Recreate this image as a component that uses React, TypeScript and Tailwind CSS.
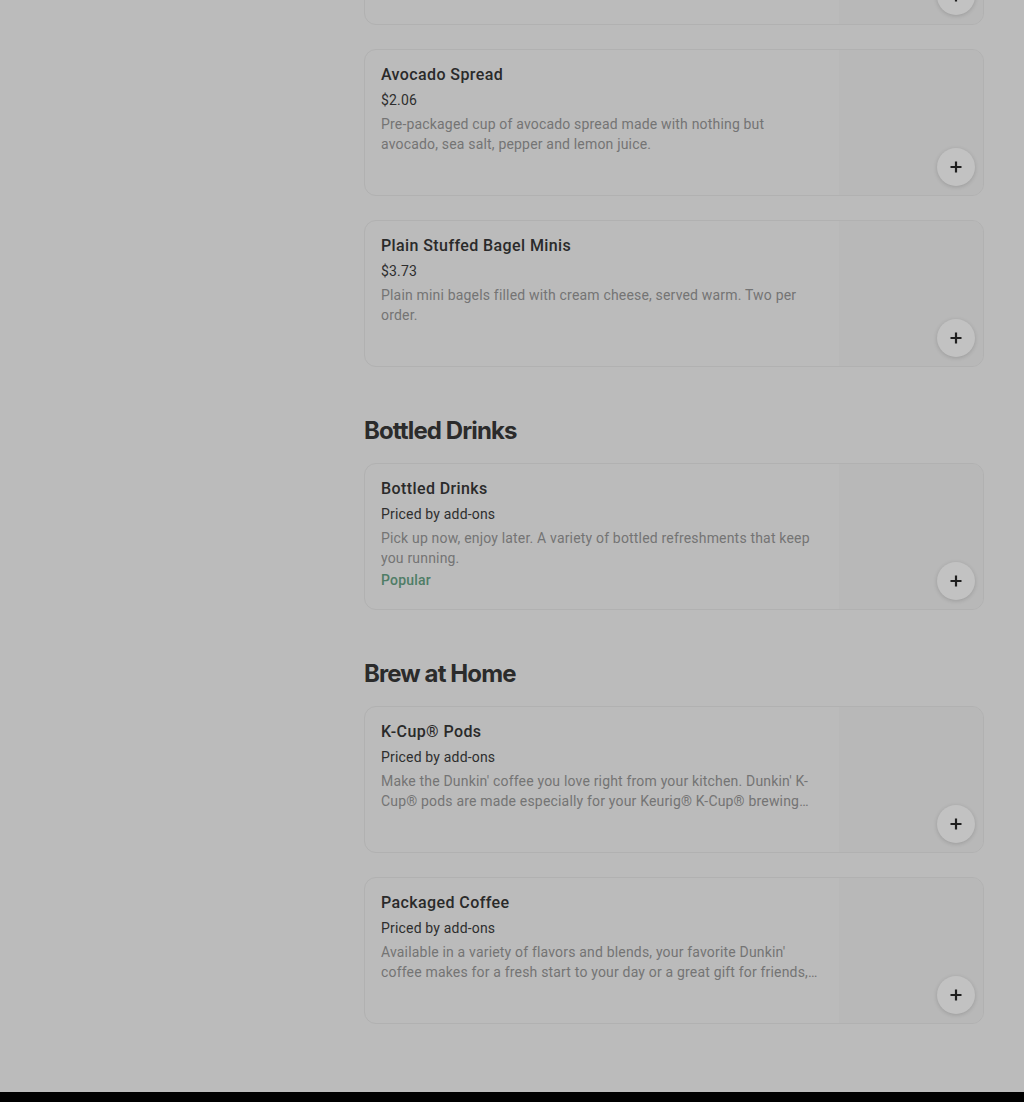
import React from "react";

type Item = {
  title?: string;
  price?: string;
  desc?: string;
  popular?: boolean;
};

function PlusButton() {
  return (
    <div className="absolute bottom-[9px] right-[8px] flex h-[38px] w-[38px] items-center justify-center rounded-full bg-[#c2c2c2] shadow-[0_1px_4px_rgba(0,0,0,0.16)]">
      <svg width="12" height="12" viewBox="0 0 12 12" aria-hidden="true">
        <path d="M6 0.5v11M0.5 6h11" stroke="#1f1f1f" strokeWidth="2.2" strokeLinecap="butt" />
      </svg>
    </div>
  );
}

function Card({ item }: { item: Item }) {
  return (
    <div className="relative flex h-[147px] w-[620px] overflow-hidden rounded-[12px] border border-[#b1b1b1] bg-[#bbbbbb]">
      <div className="flex min-w-0 flex-1 flex-col pl-4 pr-5 pt-[13px] tracking-[0.18px]">
        {item.title && (
          <div className="text-[16px] leading-6 font-medium tracking-[0.4px] text-[#2a2a2a]">{item.title}</div>
        )}
        {item.price && (
          <div className="mt-[3px] text-[14px] leading-5 text-[#2e2e2e]">{item.price}</div>
        )}
        {item.desc && (
          <div className="mt-1 line-clamp-2 text-[14px] leading-5 text-[#747474]">{item.desc}</div>
        )}
        {item.popular && (
          <div className="mt-[2px] text-[14px] leading-5 font-medium text-[#4f7d66]">Popular</div>
        )}
      </div>
      <div className="h-full w-[144px] shrink-0 bg-[#b8b8b8]" />
      <PlusButton />
    </div>
  );
}

function SectionTitle({ children }: { children: React.ReactNode }) {
  return (
    <h2 className="mb-4 mt-12 h-8 text-[24px] leading-8 font-bold tracking-[-0.9px] text-[#2b2b2b] [font-family:Inter,'Noto_Sans',sans-serif]">
      {children}
    </h2>
  );
}

export default function App() {
  return (
    <div className="flex h-[1102px] w-full flex-col overflow-hidden bg-[#bbbbbb] [font-family:Roboto,'Liberation_Sans',sans-serif]">
      <div className="flex flex-1">
        <div className="w-[364px] shrink-0" />
        <div className="mt-[-122px] flex w-[620px] flex-col pb-[68px]">
          <div className="flex flex-col gap-6">
            <Card item={{}} />
            <Card
              item={{
                title: "Avocado Spread",
                price: "$2.06",
                desc: "Pre-packaged cup of avocado spread made with nothing but avocado, sea salt, pepper and lemon juice.",
              }}
            />
            <Card
              item={{
                title: "Plain Stuffed Bagel Minis",
                price: "$3.73",
                desc: "Plain mini bagels filled with cream cheese, served warm. Two per order.",
              }}
            />
          </div>
          <SectionTitle>Bottled Drinks</SectionTitle>
          <div className="flex flex-col gap-6">
            <Card
              item={{
                title: "Bottled Drinks",
                price: "Priced by add-ons",
                desc: "Pick up now, enjoy later. A variety of bottled refreshments that keep you running.",
                popular: true,
              }}
            />
          </div>
          <SectionTitle>Brew at Home</SectionTitle>
          <div className="flex flex-col gap-6">
            <Card
              item={{
                title: "K-Cup® Pods",
                price: "Priced by add-ons",
                desc: "Make the Dunkin' coffee you love right from your kitchen. Dunkin' K-Cup® pods are made especially for your Keurig® K-Cup® brewing system and come in a variety of flavors.",
              }}
            />
            <Card
              item={{
                title: "Packaged Coffee",
                price: "Priced by add-ons",
                desc: "Available in a variety of flavors and blends, your favorite Dunkin' coffee makes for a fresh start to your day or a great gift for friends, family and coworkers.",
              }}
            />
          </div>
        </div>
      </div>
      <div className="h-[10px] w-full shrink-0 bg-black" />
    </div>
  );
}
